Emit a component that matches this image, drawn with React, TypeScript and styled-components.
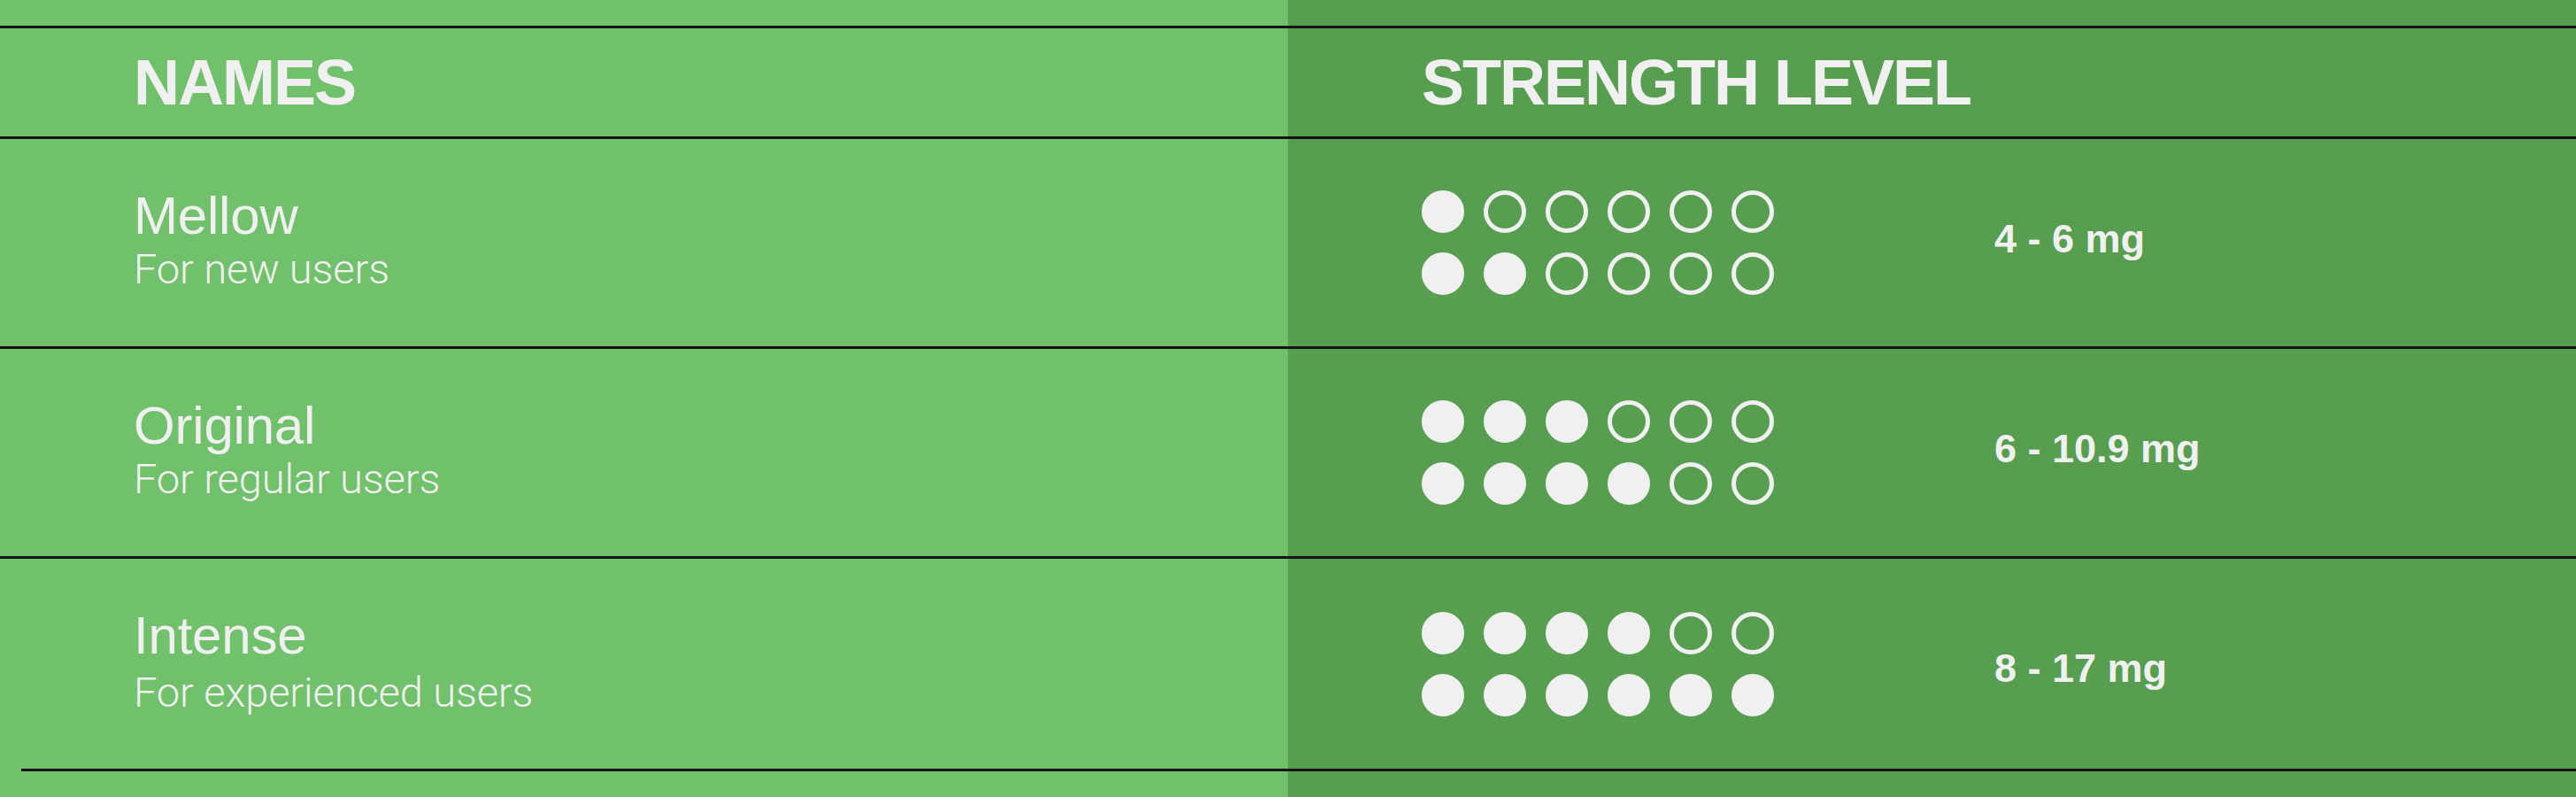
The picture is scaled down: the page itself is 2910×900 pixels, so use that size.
import React from "react";
import styled, { createGlobalStyle } from "styled-components";

const LIGHT = "#71c16c";
const DARK = "#579e51";
const INK = "#f1f0f0";
const RULE = "#141414";

const GlobalStyle = createGlobalStyle`
  html, body { margin: 0; padding: 0; }
  body {
    font-family: "Liberation Sans", Arial, sans-serif;
    background: ${LIGHT};
  }
`;

const Page = styled.div`
  min-height: 900px;
  box-sizing: border-box;
  padding-top: 29px;
  background: linear-gradient(90deg, ${LIGHT} 50%, ${DARK} 50%);
  color: ${INK};
`;

const Table = styled.div`
  display: flex;
  flex-direction: column;
`;

const HeaderRow = styled.div`
  display: grid;
  grid-template-columns: 1fr 1fr;
  height: 122px;
  border-top: 3px solid ${RULE};
  border-bottom: 3px solid ${RULE};
`;

const Row = styled.div<{ $height: number; $last?: boolean }>`
  display: grid;
  grid-template-columns: 1fr 1fr;
  height: ${(p) => p.$height}px;
  border-bottom: ${(p) => (p.$last ? "none" : `3px solid ${RULE}`)};
`;

const BottomRule = styled.div`
  height: 3px;
  margin-left: 24px;
  background: ${RULE};
`;

const Cell = styled.div<{ $tone: "light" | "dark" }>`
  background: ${(p) => (p.$tone === "light" ? LIGHT : DARK)};
  display: flex;
  align-items: center;
  padding-left: 151px;
  min-width: 0;
`;

const HeadLabel = styled.h2`
  margin: 0;
  font-family: "Liberation Sans", Arial, sans-serif;
  font-weight: 700;
  font-size: 72px;
  line-height: 1;
  letter-spacing: -2px;
  text-transform: uppercase;
`;

const NameBlock = styled.div<{ $spread: number }>`
  display: flex;
  flex-direction: column;
  gap: ${(p) => p.$spread}px;
`;

const Title = styled.div`
  font-family: "Liberation Sans", Arial, sans-serif;
  font-weight: 400;
  font-size: 60px;
  line-height: 60px;
  letter-spacing: -0.2px;
`;

const Subtitle = styled.div`
  font-family: Roboto, "Liberation Sans", sans-serif;
  font-weight: 300;
  font-size: 47px;
  line-height: 60px;
  letter-spacing: -0.1px;
`;

const StrengthWrap = styled.div`
  display: flex;
  align-items: center;
`;

const DotGrid = styled.div`
  display: grid;
  grid-template-columns: repeat(6, 48px);
  grid-auto-rows: 48px;
  gap: 22px;
`;

const Dot = styled.span<{ $filled: boolean }>`
  display: block;
  width: 48px;
  height: 48px;
  box-sizing: border-box;
  border-radius: 50%;
  border: 5px solid ${INK};
  background: ${(p) => (p.$filled ? INK : "transparent")};
`;

const Dose = styled.div<{ $shift: number }>`
  margin-left: 249px;
  font-family: "Liberation Sans", Arial, sans-serif;
  font-weight: 700;
  font-size: 45px;
  line-height: 1;
  letter-spacing: 0;
  position: relative;
  top: ${(p) => p.$shift}px;
`;

type Strain = {
  name: string;
  audience: string;
  levels: [number, number];
  dose: string;
  height: number;
  doseShift: number;
  spread: number;
};

const strains: Strain[] = [
  { name: "Mellow", audience: "For new users", levels: [1, 2], dose: "4 - 6 mg", height: 234, doseShift: -5, spread: 0 },
  { name: "Original", audience: "For regular users", levels: [3, 4], dose: "6 - 10.9 mg", height: 234, doseShift: -5, spread: 0 },
  { name: "Intense", audience: "For experienced users", levels: [4, 6], dose: "8 - 17 mg", height: 237, doseShift: 5, spread: 4 },
];

const Dots: React.FC<{ levels: [number, number] }> = ({ levels }) => (
  <DotGrid>
    {levels.map((lvl, r) =>
      Array.from({ length: 6 }, (_, i) => <Dot key={`${r}-${i}`} $filled={i < lvl} />)
    )}
  </DotGrid>
);

export default function App() {
  return (
    <>
      <GlobalStyle />
      <Page>
        <Table>
          <HeaderRow>
            <Cell $tone="light">
              <HeadLabel>Names</HeadLabel>
            </Cell>
            <Cell $tone="dark">
              <HeadLabel>Strength Level</HeadLabel>
            </Cell>
          </HeaderRow>
          {strains.map((s, idx) => (
            <Row key={s.name} $height={s.height} $last={idx === strains.length - 1}>
              <Cell $tone="light">
                <NameBlock $spread={s.spread}>
                  <Title>{s.name}</Title>
                  <Subtitle>{s.audience}</Subtitle>
                </NameBlock>
              </Cell>
              <Cell $tone="dark">
                <StrengthWrap>
                  <Dots levels={s.levels} />
                  <Dose $shift={s.doseShift}>{s.dose}</Dose>
                </StrengthWrap>
              </Cell>
            </Row>
          ))}
          <BottomRule />
        </Table>
      </Page>
    </>
  );
}
